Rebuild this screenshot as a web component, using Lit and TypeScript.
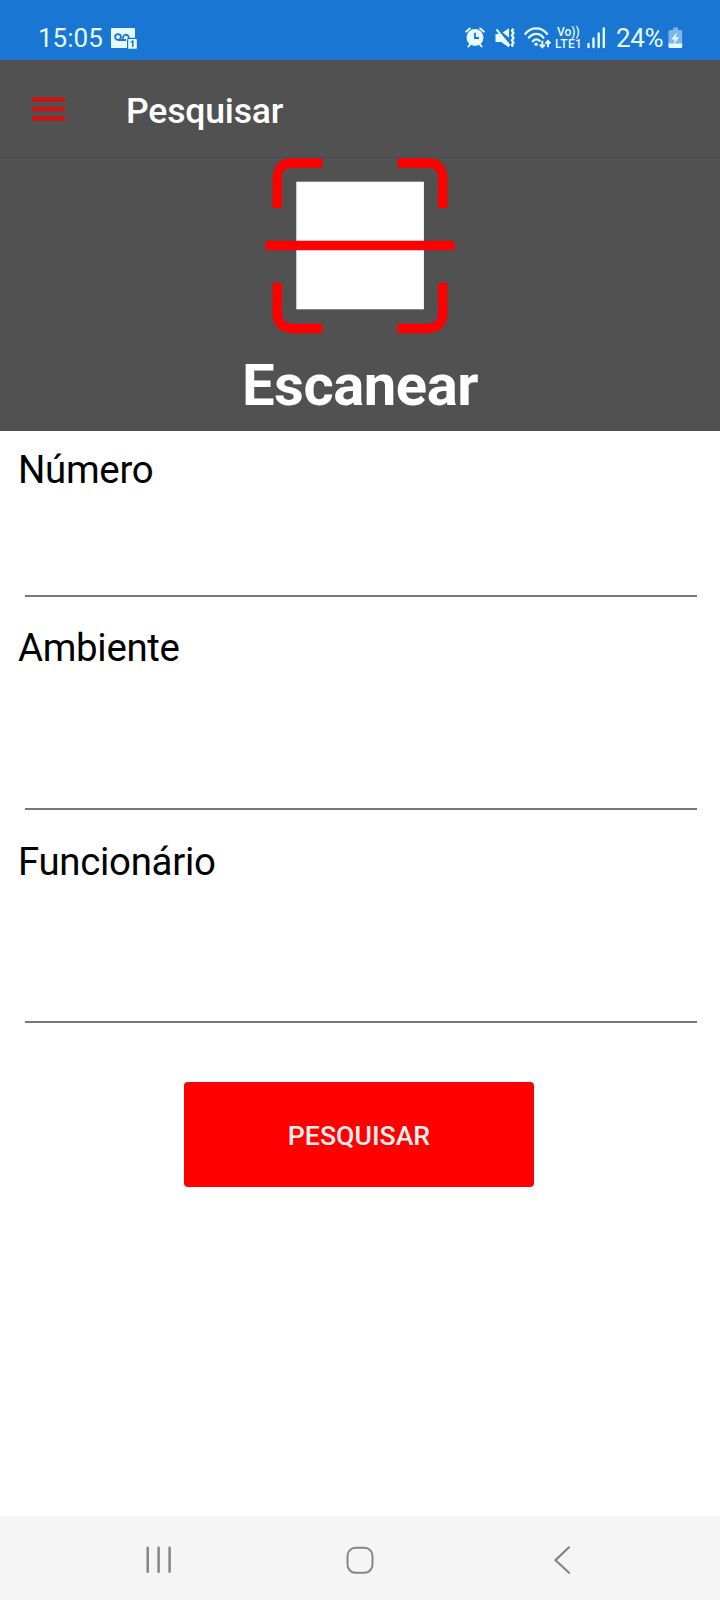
import { LitElement, html, css } from "lit";
import { customElement, property } from "lit/decorators.js";

@customElement("status-bar")
class StatusBar extends LitElement {
  static styles = css`
    :host { display: flex; align-items: flex-start; height: 60px; box-sizing: border-box; padding: 24px 35px 0 38px; background: #1976d2; color: #e6fbff; font: 400 26px/28px Roboto, sans-serif; }
    svg { display: block; flex: none; height: 28px; }
    .time { width: 73px; }
    .space { flex: 1; }
    .net { display: flex; flex-direction: column; width: 32px; padding-top: 3px; font: 500 12px/11.5px Roboto, sans-serif; white-space: nowrap; }
    .vo { padding-left: 2px; }
    .lte { letter-spacing: 0.3px; }
    .pct { width: 52px; letter-spacing: -0.3px; white-space: nowrap; }
  `;
  render() {
    return html`
      <span class="time">15:05</span>
      <svg width="28" viewBox="0 0 28 28">
        <rect x="0" y="4" width="24" height="20" rx="1" fill="currentColor" />
        <g fill="none" stroke="#1976d2" stroke-width="1.8">
          <circle cx="7" cy="13" r="2.9" /><path d="M7 16h8M12.2 14.800a2.900 2.900 0 1 1 5.500-.5" />
        </g>
        <rect x="16.6" y="14.4" width="9.8" height="11" rx="1.5" fill="currentColor" stroke="#1976d2" stroke-width="1.2" />
        <path d="M19.8 18.3l2-1.2v6" fill="none" stroke="#1976d2" stroke-width="1.5" />
      </svg>
      <span class="space"></span>
      <svg width="30" viewBox="0 0 30 28">
        <g fill="none" stroke="currentColor" stroke-linecap="round" stroke-width="2">
          <path d="M1.2 7.6l3.6-3.1M18.8 7.6l-3.6-3.1" />
          <path d="M5 20.5l-1.6 2M15 20.5l1.6 2" />
        </g>
        <circle cx="10" cy="13.6" r="8.5" fill="currentColor" />
        <path d="M10 8.8v5.2h4" fill="none" stroke="#1976d2" stroke-width="1.8" />
      </svg>
      <svg width="29" viewBox="0 0 29 28">
        <path d="M.5 10h4.200l2.200 2.400L14 19v4.500L6.200 18H.5zM7.700 8.500L14 4.200v9.600z" fill="currentColor" />
        <path d="M1.4 5.4l13.2 16.2" stroke="currentColor" stroke-width="2" />
        <path d="M18.5 4.700l-1.600 2 1.600 2.300-1.600 2.400 1.600 2.400-1.600 2.500 1.600 2.400-1.600 2.300 1.200 1.600" fill="none" stroke="currentColor" stroke-width="2.300" stroke-linejoin="round" />
      </svg>
      <svg width="31" viewBox="0 0 31 28">
        <path d="M1.400 9.800C7.200 2.600 17.400 2.600 23 9.800M5 13.600c4.200-5 10.400-5 14.300 0M8.800 17.300c2.200-2.400 4.800-2.400 6.800-.4" fill="none" stroke="currentColor" stroke-width="2.300" stroke-linecap="round" />
        <circle cx="12.100" cy="20.300" r="1.800" fill="currentColor" />
        <path d="M18.300 16.800v6M15.800 20.600l2.500 2.700 2.500-2.700M24 23.300v-6M21.500 19.500l2.500-2.700 2.500 2.700" fill="none" stroke="currentColor" stroke-width="1.900" />
      </svg>
      <span class="net"><span class="vo">Vo))</span><span class="lte">LTE1</span></span>
      <svg width="29" viewBox="0 0 29 28">
        <path d="M1.500 20v3M6.500 14.500V23M11.700 9.500V23M16.800 4.500V23" stroke="currentColor" stroke-width="2.400" stroke-linecap="round" />
      </svg>
      <span class="pct">24%</span>
      <svg width="17" viewBox="0 0 17 28">
        <path d="M5 3.500h5v2.500h2.600a1.600 1.600 0 0 1 1.600 1.600V22.400a1.600 1.600 0 0 1-1.600 1.600H2.100a1.600 1.600 0 0 1-1.600-1.600V7.600A1.600 1.600 0 0 1 2.100 6H5z" fill="#7db6ec" />
        <path d="M.5 19.500h13.700v2.900a1.600 1.600 0 0 1-1.600 1.600H2.100a1.600 1.600 0 0 1-1.600-1.600z" fill="currentColor" />
        <path d="M8.600 8.500L3.400 15.400h3.200l-.8 4.600 5.500-6.700H8z" fill="currentColor" />
      </svg>
    `;
  }
}

@customElement("form-field")
class FormField extends LitElement {
  @property() label = "";
  static styles = css`
    :host { display: flex; flex-direction: column; box-sizing: border-box; }
    label { font: 400 38.4px/46px Roboto, sans-serif; letter-spacing: -0.3px; color: #000; padding-left: 18px; }
    input { flex: 1; min-height: 0; margin: 0 23px 0 25px; padding: 0; border: 0; border-bottom: 2px solid #777; border-radius: 0; background: transparent; outline: 0; font: 400 32px Roboto, sans-serif; }
  `;
  render() {
    return html`<label for="field">${this.label}</label><input id="field" type="text" />`;
  }
}

@customElement("app-root")
class AppRoot extends LitElement {
  static styles = css`
    :host { display: flex; flex-direction: column; width: 720px; height: 1600px; background: #fff; font-family: Roboto, sans-serif; }
    svg { display: block; flex: none; }
    .bar { display: flex; align-items: center; height: 98px; box-sizing: border-box; padding-left: 32px; background: #515151; border-bottom: 1px solid #4a4a4a; color: #fff; }
    .title { margin: 5px 0 0 60px; font-size: 35.6px; line-height: 42px; font-weight: 500; letter-spacing: -0.2px; }
    .scan { display: flex; flex-direction: column; align-items: center; height: 273px; background: #515151; color: #fff; }
    .scan-label { margin-top: 17px; font-size: 58px; line-height: 68px; font-weight: 700; letter-spacing: -0.45px; }
    form { display: flex; flex-direction: column; flex: 1; margin: 0; padding-top: 16px; }
    .first { height: 150px; }
    .next { height: 185px; margin-top: 28px; }
    .last { height: 184px; margin-top: 29px; }
    .submit { align-self: center; width: 350px; height: 105px; margin: 59px 2px 0 0; padding: 3px 0 0; border: 0; border-radius: 4px; background: #f00; color: #fff0ed; font: 500 26.7px/32px Roboto, sans-serif; }
    .nav { display: flex; align-items: center; justify-content: space-between; height: 84px; box-sizing: border-box; padding: 4px 148px 0 144px; background: #f5f5f5; }
    .home { margin-right: 6px; }
  `;
  render() {
    return html`
      <status-bar></status-bar>
      <header class="bar">
        <svg width="34" height="24" viewBox="0 0 34 24"><path d="M0 2.500h33M0 12h33M0 21.500h33" stroke="#d01212" stroke-width="4.600" /></svg>
        <span class="title">Pesquisar</span>
      </header>
      <section class="scan">
        <svg width="190" height="176" viewBox="0 0 190 176">
          <rect x="31.300" y="23.700" width="127.600" height="127.600" fill="#fff" />
          <g fill="none" stroke="#f00" stroke-width="9.500">
            <path d="M12.300 50V21Q12.300 5 28 5H57.500" />
            <path d="M177.700 50V21Q177.700 5 162 5H132.500" />
            <path d="M12.300 125V154.500Q12.300 170.500 28 170.500H57.500" />
            <path d="M177.700 125V154.500Q177.700 170.500 162 170.500H132.500" />
          </g>
          <rect x="0.500" y="82.700" width="189" height="9.500" rx="2.500" fill="#f00" />
        </svg>
        <span class="scan-label">Escanear</span>
      </section>
      <form>
        <form-field class="first" label="Número"></form-field>
        <form-field class="next" label="Ambiente"></form-field>
        <form-field class="last" label="Funcionário"></form-field>
        <button class="submit" type="button">PESQUISAR</button>
      </form>
      <nav class="nav">
        <svg width="28" height="28" viewBox="0 0 28 28"><path d="M3.700 1.800v24M14.600 1.800v24M25.600 1.800v24" stroke="#858585" stroke-width="2.500" stroke-linecap="round" /></svg>
        <svg class="home" width="28" height="28" viewBox="0 0 28 28"><rect x="1.500" y="1.800" width="25" height="25" rx="8" fill="none" stroke="#858585" stroke-width="2" /></svg>
        <svg width="18" height="28" viewBox="0 0 18 28"><path d="M15 1.300L1.500 14.200l13.500 12.600" fill="none" stroke="#858585" stroke-width="2.200" stroke-linecap="round" /></svg>
      </nav>
    `;
  }
}
